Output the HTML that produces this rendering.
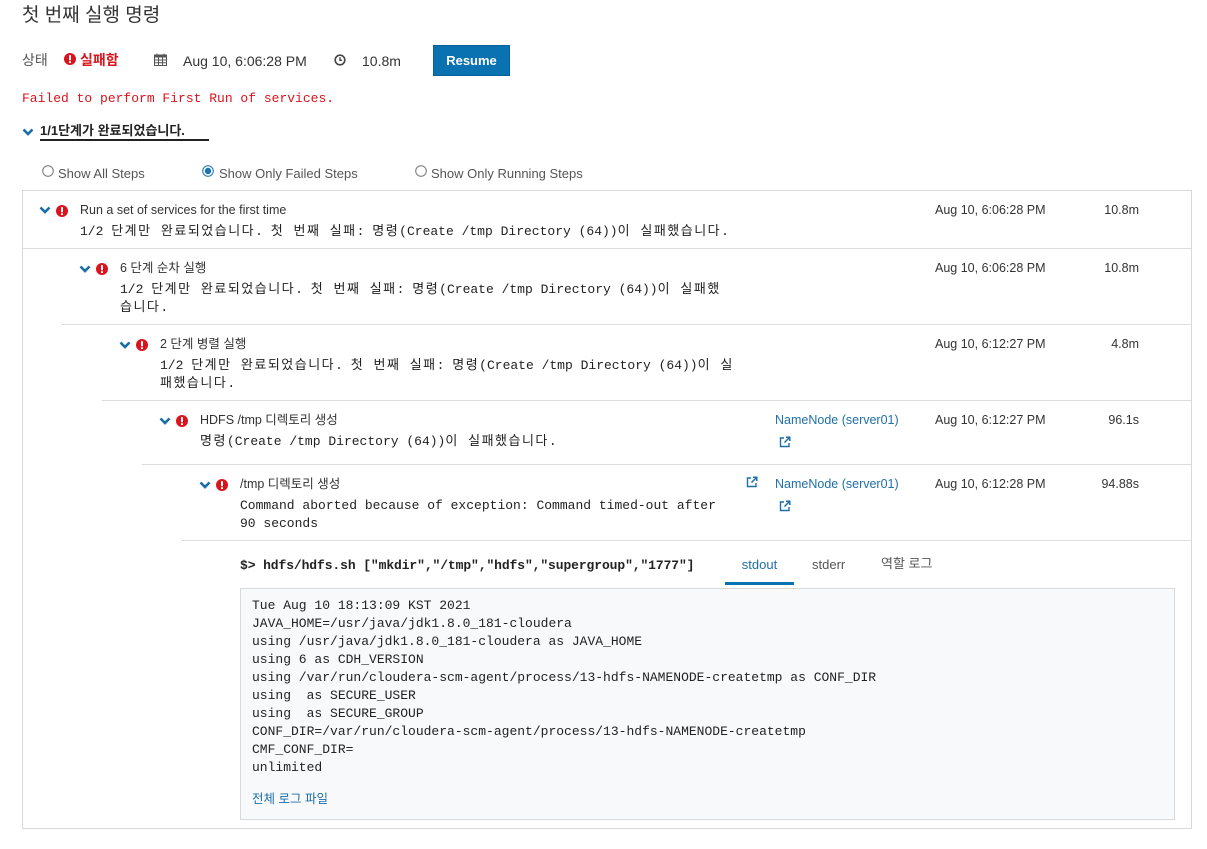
<!DOCTYPE html>
<html><head><meta charset="utf-8"><style>
*{margin:0;padding:0;box-sizing:border-box}
body{width:1207px;height:849px;background:#fff;position:relative;font-family:"Liberation Sans","Noto Sans CJK KR",sans-serif;color:#333;overflow:hidden}
.a{position:absolute;white-space:nowrap}
.s{font-size:13px;line-height:18px}
.m{font-family:"Liberation Mono","Noto Sans CJK KR",monospace;font-size:13px;line-height:18px;color:#222}
.k{letter-spacing:1.5px}
.ln{position:absolute;height:1px;background:#ddd;right:16px}
.blue{color:#1f6fa8}
</style></head><body>
<svg width="0" height="0" style="position:absolute"><defs>
<symbol id="chev" viewBox="0 0 12 8"><path d="M1.5 1.5 L6 6 L10.5 1.5" stroke="#1a6ea6" stroke-width="2.6" fill="none"/></symbol>
<symbol id="err" viewBox="0 0 12 12"><circle cx="6" cy="6" r="6" fill="#d9141d"/><rect x="5" y="2.2" width="2" height="5" fill="#fff"/><rect x="5" y="8.2" width="2" height="1.8" fill="#fff"/></symbol>
<symbol id="ext" viewBox="0 0 12 12"><path d="M5 2H1.5V10.5H10V7" stroke="#1f6fa8" stroke-width="1.4" fill="none"/><path d="M5.5 6.5L10.5 1.5M7 1.2H10.8V5" stroke="#1f6fa8" stroke-width="1.5" fill="none"/></symbol>
</defs></svg>

<div class="a" style="left:22px;top:4px;font-size:19px;line-height:24px;color:#333">첫 번째 실행 명령</div>

<div class="a s" style="left:22px;top:51px;font-size:14px;color:#555">상태</div>
<svg class="a" style="left:64px;top:53px" width="12" height="12"><use href="#err"/></svg>
<div class="a s" style="left:80px;top:51px;font-size:14px;color:#d9141d;font-weight:bold">실패함</div>
<svg class="a" style="left:154px;top:53px" width="13" height="13" viewBox="0 0 13 13"><rect x="0.5" y="2" width="12" height="10.5" fill="none" stroke="#555"/><rect x="0.5" y="2" width="12" height="2.5" fill="#555"/><path d="M3 0.5V3M10 0.5V3M4.5 4.5V12.5M8.5 4.5V12.5M0.5 7H12.5M0.5 9.8H12.5" stroke="#555" fill="none"/></svg>
<div class="a s" style="left:183px;top:52px;font-size:14px;color:#333">Aug 10, 6:06:28 PM</div>
<svg class="a" style="left:334px;top:54px" width="12" height="12" viewBox="0 0 12 12"><circle cx="6" cy="6" r="4.8" fill="none" stroke="#444" stroke-width="1.6"/><path d="M6 3.2V6.3H8" stroke="#444" stroke-width="1.4" fill="none"/></svg>
<div class="a s" style="left:362px;top:52px;font-size:14px;color:#333">10.8m</div>
<div class="a" style="left:433px;top:45px;width:77px;height:31px;background:#0a72b1;border:1px solid #0a5f94;color:#fff;font-size:13px;line-height:29px;text-align:center;font-weight:bold">Resume</div>

<div class="a m" style="left:22px;top:90px;color:#d9141d">Failed to perform First Run of services.</div>

<svg class="a" style="left:22px;top:128px" width="12" height="8"><use href="#chev"/></svg>
<div class="a" style="left:40px;top:122px;font-size:13px;line-height:18px;font-weight:bold;color:#222">1/1단계가 완료되었습니다.</div>
<div class="a" style="left:40px;top:139px;width:169px;height:2px;background:#222"></div>

<svg class="a" style="left:42px;top:165px" width="12" height="12" viewBox="0 0 12 12"><circle cx="6" cy="6" r="5.3" fill="#fff" stroke="#777"/></svg>
<div class="a s" style="left:58px;top:165px;color:#555">Show All Steps</div>
<svg class="a" style="left:202px;top:165px" width="12" height="12" viewBox="0 0 12 12"><circle cx="6" cy="6" r="5.3" fill="#fff" stroke="#1a73b4"/><circle cx="6" cy="6" r="3.2" fill="#1a73b4"/></svg>
<div class="a s" style="left:219px;top:165px;color:#555">Show Only Failed Steps</div>
<svg class="a" style="left:415px;top:165px" width="12" height="12" viewBox="0 0 12 12"><circle cx="6" cy="6" r="5.3" fill="#fff" stroke="#777"/></svg>
<div class="a s" style="left:431px;top:165px;color:#555">Show Only Running Steps</div>

<div class="a" style="left:22px;top:190px;width:1170px;height:639px;border:1px solid #d8d8d8"></div>
<div class="ln" style="left:22px;top:248px"></div>
<div class="ln" style="left:62px;top:324px"></div>
<div class="ln" style="left:102px;top:400px"></div>
<div class="ln" style="left:142px;top:464px"></div>
<div class="ln" style="left:182px;top:540px"></div>

<!-- row 0 -->
<svg class="a" style="left:39px;top:206px" width="12" height="8"><use href="#chev"/></svg>
<svg class="a" style="left:56px;top:205px" width="12" height="12"><use href="#err"/></svg>
<div class="a s" style="left:80px;top:201px;font-size:12.5px">Run a set of services for the first time</div>
<div class="a m" style="left:80px;top:223px">1/2 <span class="k">단계만 완료되었습니다</span>. <span class="k">첫 번째 실패</span>: <span class="k">명령</span>(Create /tmp Directory (64))<span class="k">이 실패했습니다</span>.</div>
<div class="a s" style="left:935px;top:201px;font-size:12.5px">Aug 10, 6:06:28 PM</div>
<div class="a s" style="left:1060px;width:79px;text-align:right;top:201px;font-size:12.5px">10.8m</div>

<!-- row 1 -->
<svg class="a" style="left:79px;top:265px" width="12" height="8"><use href="#chev"/></svg>
<svg class="a" style="left:96px;top:263px" width="12" height="12"><use href="#err"/></svg>
<div class="a s" style="left:120px;top:259px;font-size:12.5px">6 단계 순차 실행</div>
<div class="a m" style="left:120px;top:281px">1/2 <span class="k">단계만 완료되었습니다</span>. <span class="k">첫 번째 실패</span>: <span class="k">명령</span>(Create /tmp Directory (64))<span class="k">이 실패했</span><br><span class="k">습니다</span>.</div>
<div class="a s" style="left:935px;top:259px;font-size:12.5px">Aug 10, 6:06:28 PM</div>
<div class="a s" style="left:1060px;width:79px;text-align:right;top:259px;font-size:12.5px">10.8m</div>

<!-- row 2 -->
<svg class="a" style="left:119px;top:341px" width="12" height="8"><use href="#chev"/></svg>
<svg class="a" style="left:136px;top:339px" width="12" height="12"><use href="#err"/></svg>
<div class="a s" style="left:160px;top:335px;font-size:12.5px">2 단계 병렬 실행</div>
<div class="a m" style="left:160px;top:357px">1/2 <span class="k">단계만 완료되었습니다</span>. <span class="k">첫 번째 실패</span>: <span class="k">명령</span>(Create /tmp Directory (64))<span class="k">이 실</span><br><span class="k">패했습니다</span>.</div>
<div class="a s" style="left:935px;top:335px;font-size:12.5px">Aug 10, 6:12:27 PM</div>
<div class="a s" style="left:1060px;width:79px;text-align:right;top:335px;font-size:12.5px">4.8m</div>

<!-- row 3 -->
<svg class="a" style="left:159px;top:417px" width="12" height="8"><use href="#chev"/></svg>
<svg class="a" style="left:176px;top:415px" width="12" height="12"><use href="#err"/></svg>
<div class="a s" style="left:200px;top:411px;font-size:12.5px">HDFS /tmp 디렉토리 생성</div>
<div class="a m" style="left:200px;top:433px"><span class="k">명령</span>(Create /tmp Directory (64))<span class="k">이 실패했습니다</span>.</div>
<div class="a s blue" style="left:775px;top:411px;font-size:12.5px">NameNode (server01)</div>
<svg class="a" style="left:779px;top:436px" width="12" height="12"><use href="#ext"/></svg>
<div class="a s" style="left:935px;top:411px;font-size:12.5px">Aug 10, 6:12:27 PM</div>
<div class="a s" style="left:1060px;width:79px;text-align:right;top:411px;font-size:12.5px">96.1s</div>

<!-- row 4 -->
<svg class="a" style="left:199px;top:481px" width="12" height="8"><use href="#chev"/></svg>
<svg class="a" style="left:216px;top:479px" width="12" height="12"><use href="#err"/></svg>
<div class="a s" style="left:240px;top:475px;font-size:12.5px">/tmp 디렉토리 생성</div>
<div class="a m" style="left:240px;top:497px">Command aborted because of exception: Command timed-out after<br>90 seconds</div>
<svg class="a" style="left:746px;top:476px" width="12" height="12"><use href="#ext"/></svg>
<div class="a s blue" style="left:775px;top:475px;font-size:12.5px">NameNode (server01)</div>
<svg class="a" style="left:779px;top:500px" width="12" height="12"><use href="#ext"/></svg>
<div class="a s" style="left:935px;top:475px;font-size:12.5px">Aug 10, 6:12:28 PM</div>
<div class="a s" style="left:1060px;width:79px;text-align:right;top:475px;font-size:12.5px">94.88s</div>

<!-- command -->
<div class="a m" style="left:240px;top:557px;font-weight:bold;color:#222;letter-spacing:-0.1px">$&gt; hdfs/hdfs.sh ["mkdir","/tmp","hdfs","supergroup","1777"]</div>
<div class="a s" style="left:725px;width:69px;text-align:center;top:556px;color:#1f6fa8">stdout</div>
<div class="a" style="left:725px;top:582px;width:69px;height:3px;background:#0a72b1"></div>
<div class="a s" style="left:812px;top:556px;color:#555">stderr</div>
<div class="a s" style="left:881px;top:555px;color:#555">역할 로그</div>

<div class="a" style="left:240px;top:588px;width:935px;height:232px;background:#f8f9fb;border:1px solid #d8d8d8"></div>
<div class="a m" style="left:252px;top:597px;color:#222">Tue Aug 10 18:13:09 KST 2021<br>JAVA_HOME=/usr/java/jdk1.8.0_181-cloudera<br>using /usr/java/jdk1.8.0_181-cloudera as JAVA_HOME<br>using 6 as CDH_VERSION<br>using /var/run/cloudera-scm-agent/process/13-hdfs-NAMENODE-createtmp as CONF_DIR<br>using&nbsp; as SECURE_USER<br>using&nbsp; as SECURE_GROUP<br>CONF_DIR=/var/run/cloudera-scm-agent/process/13-hdfs-NAMENODE-createtmp<br>CMF_CONF_DIR=<br>unlimited</div>
<div class="a s blue" style="left:252px;top:790px;font-size:12.5px">전체 로그 파일</div>
</body></html>
